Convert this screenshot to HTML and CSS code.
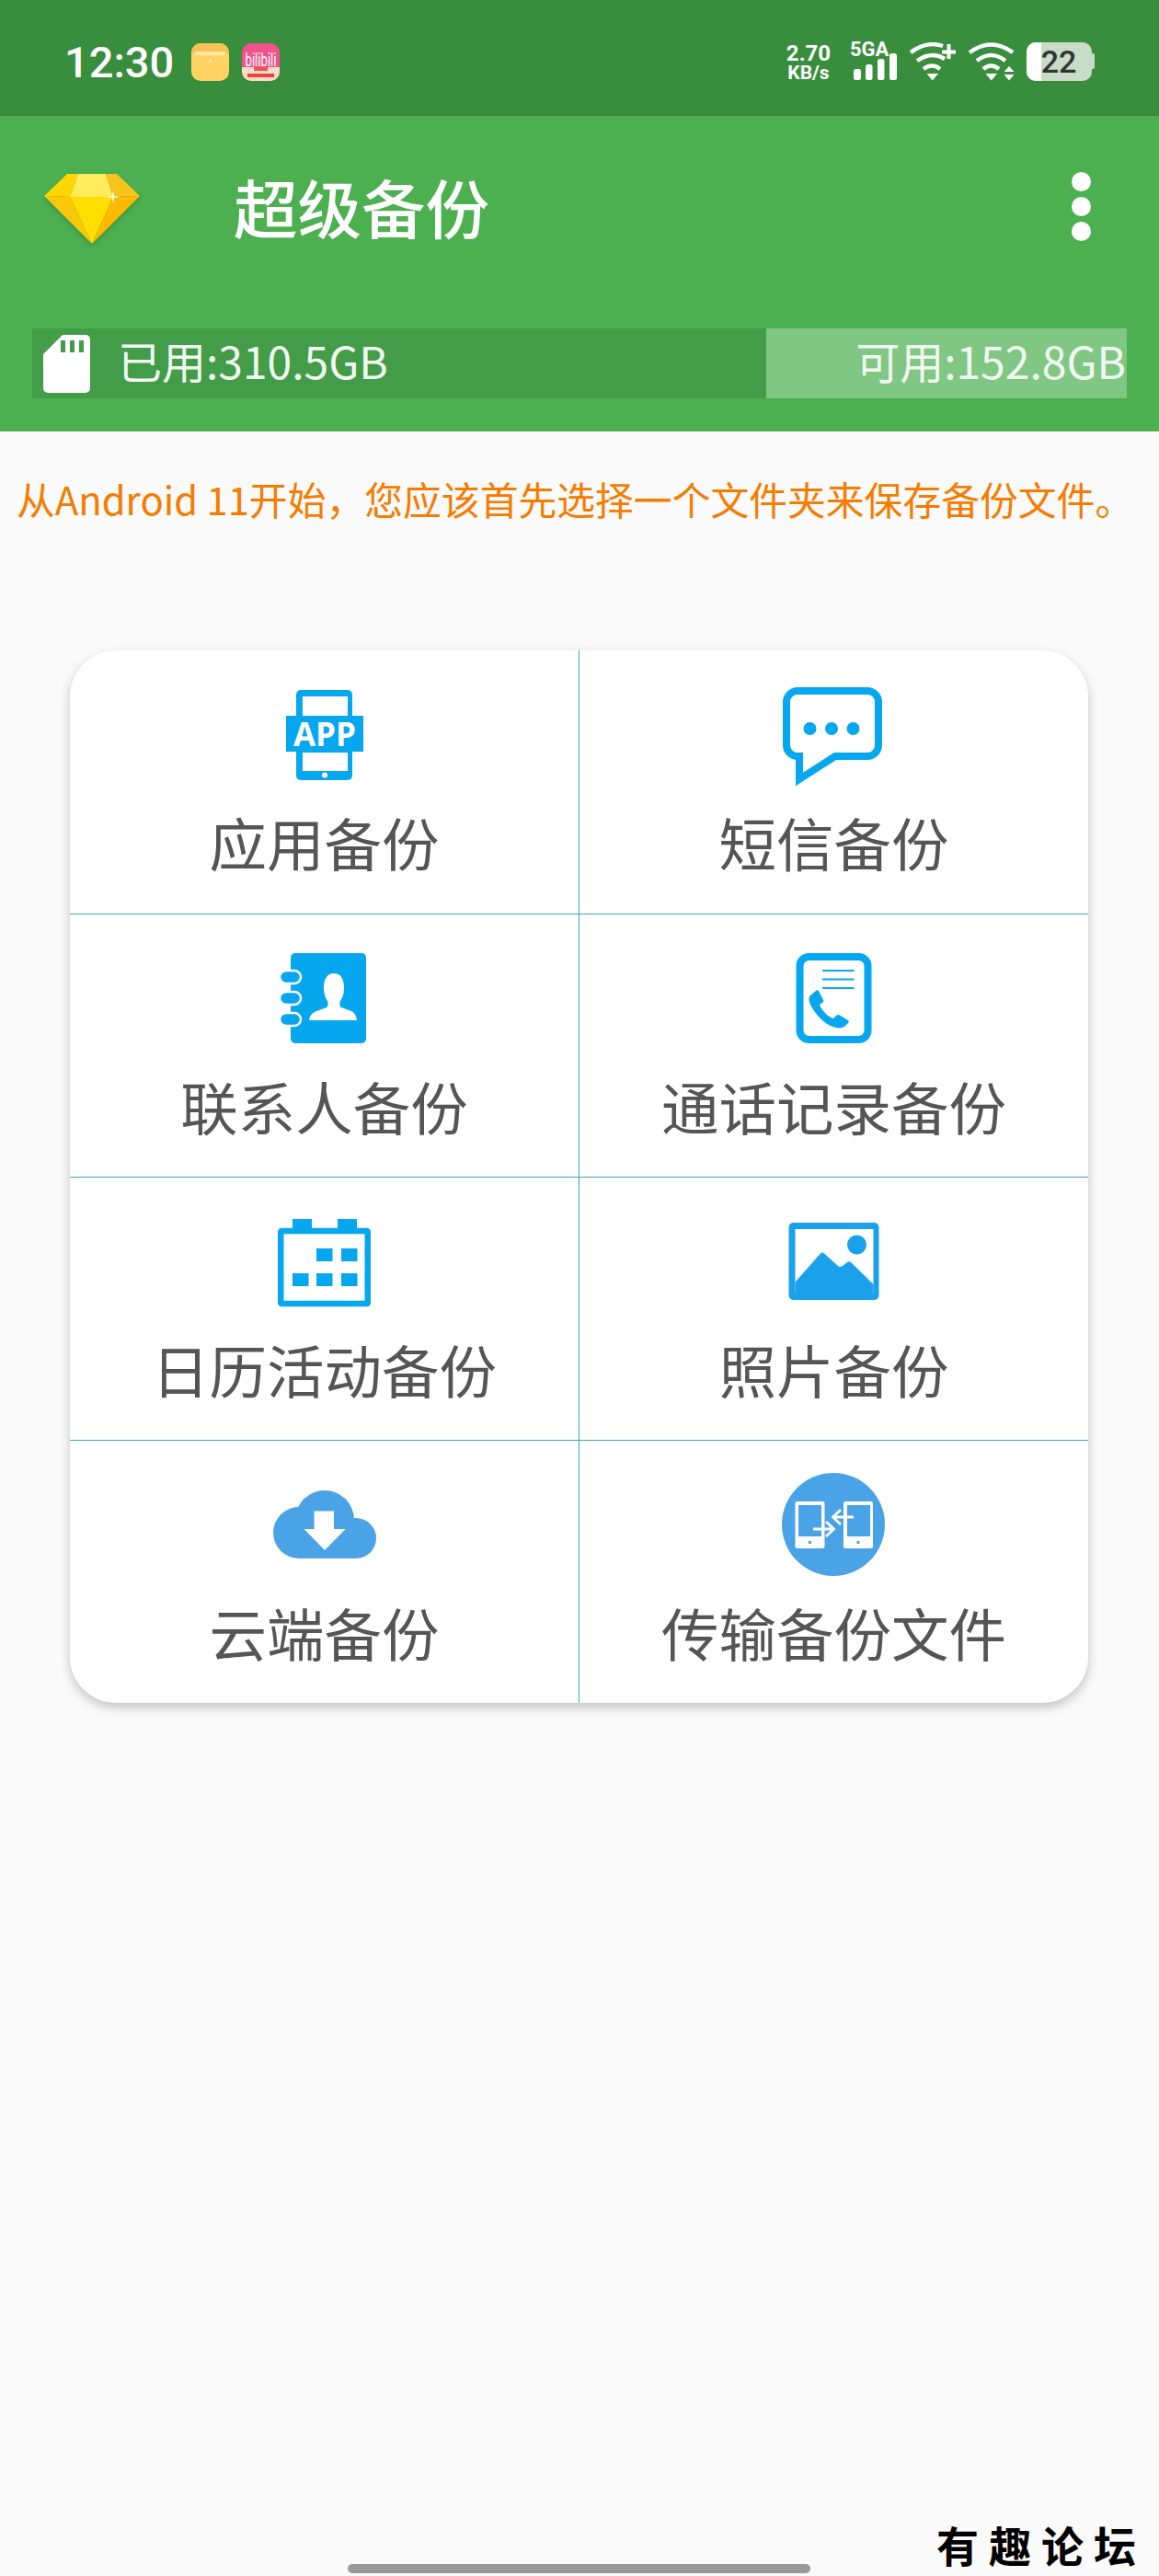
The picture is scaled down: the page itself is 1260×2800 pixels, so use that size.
FILE: index.html
```html
<!DOCTYPE html>
<html>

<head>
    <meta charset="UTF-8">
    <title>超级备份</title>
    <link rel="stylesheet" href="styles.css">
</head>

<body>
    <div class="page">
        <!-- 状态栏 -->
        <div class="status-bar">
            <span class="time">12:30</span>
            <svg class="app-icon first" viewBox="0 0 41 41">
                <rect width="41" height="41" rx="10" fill="#ffd261" />
                <path d="M0 10a10 10 0 0 1 10-10h21a10 10 0 0 1 10 10v1H0z" fill="#f8c253" />
                <rect x="4" y="9" width="33" height="4" fill="#ffe9ad" />
                <circle cx="20.500" cy="19" r="1.500" fill="#fff3cf" />
            </svg>
            <svg class="app-icon" viewBox="0 0 41 41">
                <rect width="41" height="41" rx="10" fill="#f2528c" />
                <path d="M0 26h41v5a10 10 0 0 1-10 10H10a10 10 0 0 1-10-10z" fill="#fbdcc8" />
                <text class="bili" x="3.500" y="25" textLength="34" lengthAdjust="spacingAndGlyphs">bilibili</text>
                <rect x="13" y="26" width="15" height="4" fill="#e4584f" />
                <rect x="6" y="33" width="29" height="4" fill="#e4483f" />
            </svg>
            <div class="status-right">
                <div class="speed"><span class="speed-num">2.70</span><span class="speed-unit">KB/s</span></div>
                <svg class="net" viewBox="0 0 51 42">
                    <text class="net-text" x="0" y="15">5GA</text>
                    <rect x="4" y="29" width="8" height="12" rx="2.500" fill="#fff" />
                    <rect x="17" y="24" width="7.500" height="17" rx="2.500" fill="#fff" />
                    <rect x="30" y="18" width="7.500" height="23" rx="2.500" fill="#fff" />
                    <rect x="43" y="12" width="8" height="29" rx="2.500" fill="#fff" />
                </svg>
                <svg class="wifi" viewBox="0 0 51 42">
                    <g fill="none" stroke="#fff" stroke-width="4.500">
                        <path d="M2 11Q20-2 37 4" />
                        <path d="M9 20Q25 9 39 18" />
                        <path d="M16 29Q25 22 34 29" />
                    </g>
                    <path d="M19.500 34H32L25.700 41.500z" fill="#fff" />
                    <path d="M41.500 2h4v6.500H51v4h-5.500V18h-4v-5.500H36v-4h5.500z" fill="#fff" />
                </svg>
                <svg class="wifi" viewBox="0 0 51 42">
                    <g fill="none" stroke="#fff" stroke-width="4.500">
                        <path d="M2 11Q25.500-6 49 11" />
                        <path d="M10 20Q25.500 8 41 20" />
                        <path d="M17 29Q25.500 22 34 29" />
                    </g>
                    <path d="M19.500 34H32L25.700 41.500z" fill="#fff" />
                    <path d="M39.500 32L45 26l5.500 6zM39.500 35H50.500L45 41.500z" fill="#fff" />
                </svg>
                <svg class="battery" viewBox="0 0 74 42">
                    <rect width="71" height="42" rx="10" fill="#c8dcc8" />
                    <path d="M10 0h6v42h-6a10 10 0 0 1-10-10V10a10 10 0 0 1 10-10z" fill="#fff" />
                    <path d="M71 12h1a2 2 0 0 1 2 2v13a2 2 0 0 1-2 2h-1z" fill="#c8dcc8" />
                    <text class="battery-text" x="35" y="33" text-anchor="middle">22</text>
                </svg>
            </div>
        </div>

        <!-- 顶部 -->
        <div class="header">
            <div class="title-row">
                <svg class="gem" viewBox="0 0 105 78">
                    <polygon points="26,1 38,1 29,26 1,25" fill="#ffd600" />
                    <polygon points="38,1 68,1 76,26 29,26" fill="#ffec5c" />
                    <polygon points="68,1 80,1 105,25 76,26" fill="#f7c51e" />
                    <polygon points="1,25 29,26 53,77" fill="#fcc808" />
                    <polygon points="29,26 76,26 53,77" fill="#ffde00" />
                    <polygon points="76,26 105,25 53,77" fill="#ffb900" />
                    <path d="M76 19l1.200 5.800 6 1.200-6 1.200-1.200 5.800-1.200-5.800-6-1.200 6-1.200z" fill="#fff9d6" />
                </svg>
                <h1 class="title">超级备份</h1>
                <div class="menu"><i></i><i></i><i></i></div>
            </div>
            <div class="storage">
                <div class="storage-used">
                    <svg class="sd" viewBox="0 0 51 63">
                        <path d="M21 0H46a5 5 0 0 1 5 5V58a5 5 0 0 1-5 5H5a5 5 0 0 1-5-5V21z" fill="#fff" />
                        <rect x="19" y="6" width="5" height="13" fill="#439c47" />
                        <rect x="29" y="6" width="5" height="13" fill="#439c47" />
                        <rect x="39" y="6" width="5" height="13" fill="#439c47" />
                    </svg>
                    <span>已用:310.5GB</span>
                </div>
                <div class="storage-free">可用:152.8GB</div>
            </div>
        </div>

        <p class="notice">从Android 11开始，您应该首先选择一个文件夹来保存备份文件。</p>

        <!-- 功能列表 -->
        <div class="card">
            <div class="cell">
                <svg class="icon" viewBox="0 0 112 112">
                    <rect x="25" y="7" width="61" height="98" rx="5" fill="#06a7ee" />
                    <rect x="32" y="14" width="49" height="22" fill="#fff" />
                    <rect x="32" y="75" width="49" height="20" fill="#fff" />
                    <rect x="14" y="35" width="84" height="39" fill="#06a7ee" />
                    <text class="icon-app" x="56" y="68" text-anchor="middle">APP</text>
                    <circle cx="56" cy="99.500" r="3" fill="#fff" />
                </svg>
                <div class="label">应用备份</div>
            </div>
            <div class="cell">
                <svg class="icon" viewBox="0 0 112 112">
                    <path d="M16 8H92a12 12 0 0 1 12 12V67a12 12 0 0 1-12 12H57L18 104V79H16a12 12 0 0 1-12-12V20a12 12 0 0 1 12-12z" fill="none" stroke="#06a7ee" stroke-width="8" />
                    <circle cx="29.500" cy="49" r="7" fill="#06a7ee" />
                    <circle cx="53" cy="49" r="7" fill="#06a7ee" />
                    <circle cx="76.500" cy="49" r="7" fill="#06a7ee" />
                </svg>
                <div class="label">短信备份</div>
            </div>
            <div class="cell">
                <svg class="icon" viewBox="0 0 112 112">
                    <rect x="19" y="6" width="82" height="98" rx="5" fill="#06a7ee" />
                    <g fill="#06a7ee" stroke="#fff" stroke-width="2.500">
                        <rect x="7" y="25" width="23" height="14" rx="7" />
                        <rect x="7" y="48" width="23" height="14" rx="7" />
                        <rect x="7" y="71" width="23" height="14" rx="7" />
                    </g>
                    <path d="M39 79C40 72 44 70 50 68L58 65C60 64 60 60 59 58C56 54 55 48 55 43C55 34 59 28 66 28C73 28 77 34 77 43C77 48 76 54 73 58C72 60 72 64 74 65L82 68C88 70 90 72 91 79z" fill="#fff" />
                </svg>
                <div class="label">联系人备份</div>
            </div>
            <div class="cell">
                <svg class="icon" viewBox="0 0 112 112">
                    <rect x="18.500" y="10" width="74" height="90" rx="10" fill="none" stroke="#06a7ee" stroke-width="8" />
                    <path d="M43 25H77.500M43 34.500H77.500M43 44H77.500" stroke="#06a7ee" stroke-width="2.200" />
                    <path d="M30 52L36 47C37 46 38 46 39 47L44 57C45 58 44 59 43 60L40 62C41 67 50 76 55 77L58 74C59 73 60 73 61 73L71 79C72 80 72 81 71 82L67 86C64 88 58 88 52 85C42 80 34 70 30 62C28 58 28 54 30 52z" fill="#06a7ee" />
                </svg>
                <div class="label">通话记录备份</div>
            </div>
            <div class="cell">
                <svg class="icon" viewBox="0 0 112 112">
                    <rect x="8.250" y="22" width="94.500" height="79" rx="1" fill="none" stroke="#06a7ee" stroke-width="6.500" />
                    <g fill="#06a7ee">
                        <rect x="21" y="9" width="21" height="12" />
                        <rect x="70" y="9" width="21" height="12" />
                        <rect x="47" y="41" width="17.500" height="14" />
                        <rect x="74" y="41" width="17.500" height="14" />
                        <rect x="21" y="68" width="17.500" height="14" />
                        <rect x="47" y="68" width="17.500" height="14" />
                        <rect x="74" y="68" width="17.500" height="14" />
                    </g>
                </svg>
                <div class="label">日历活动备份</div>
            </div>
            <div class="cell">
                <svg class="icon" viewBox="0 0 112 112">
                    <rect x="6.500" y="13" width="98" height="84" rx="5" fill="#1ba1ec" />
                    <rect x="13.500" y="20" width="85" height="70" fill="#fff" />
                    <circle cx="80.500" cy="37" r="10.500" fill="#1ba1ec" />
                    <path d="M13.500 77.500L41 46.500Q43 44.500 45 46.500L60 60Q63 62 65 60L70 56Q72 54.500 74 56L98.500 80V90H13.500z" fill="#1ba1ec" />
                </svg>
                <div class="label">照片备份</div>
            </div>
            <div class="cell">
                <svg class="icon" viewBox="0 0 112 112">
                    <g fill="#4aa3e6">
                        <circle cx="56" cy="50" r="32" />
                        <circle cx="28" cy="64" r="28" />
                        <circle cx="90" cy="70" r="22" />
                        <rect x="28" y="70" width="62" height="22" />
                    </g>
                    <path d="M44.500 40.500H66V60H78.700L56 83L33.600 60H44.500z" fill="#fff" />
                </svg>
                <div class="label">云端备份</div>
            </div>
            <div class="cell">
                <svg class="icon" viewBox="0 0 112 112">
                    <circle cx="55" cy="55" r="56" fill="#4aa3e6" />
                    <rect x="13.500" y="30" width="32" height="51" rx="2" fill="#fff" />
                    <rect x="66" y="30" width="32" height="51" rx="2" fill="#fff" />
                    <rect x="17" y="34" width="25" height="34" fill="#4aa3e6" />
                    <rect x="70" y="34" width="25" height="34" fill="#4aa3e6" />
                    <rect x="28" y="73" width="3" height="3" fill="#4aa3e6" />
                    <rect x="80.500" y="73" width="3" height="3" fill="#4aa3e6" />
                    <path d="M33 60H55M47 52L55.500 60L47 68" fill="none" stroke="#fff" stroke-width="2.800" />
                    <path d="M77 47H55M63 39L54.500 47L63 55" fill="none" stroke="#fff" stroke-width="2.800" />
                </svg>
                <div class="label">传输备份文件</div>
            </div>
        </div>

        <div class="watermark">有趣论坛</div>
        <div class="home-bar"></div>
    </div>
</body>

</html>
```

FILE: styles.css
```css
/* 页面 */
body {
    margin: 0;
}

.page {
    position: relative;
    width: 1260px;
    height: 2800px;
    overflow: hidden;
    background: #fafafa;
    font-family: "Noto Sans CJK SC", "Noto Sans", sans-serif;
}

/* 状态栏 */
.status-bar {
    display: flex;
    align-items: center;
    box-sizing: border-box;
    height: 126px;
    padding: 8px 70px 0 70px;
    background: #388e3c;
    color: #fff;
}

.time {
    width: 138px;
    font-family: Roboto, sans-serif;
    font-size: 47px;
    font-weight: 500;
}

.app-icon {
    width: 41px;
    height: 41px;
    margin-left: 14px;
    overflow: visible;
}

.app-icon.first {
    margin-left: 0;
}

.bili {
    font-family: Roboto, sans-serif;
    font-size: 20px;
    fill: #fff;
}

.status-right {
    display: flex;
    align-items: center;
    gap: 13px;
    margin-left: auto;
}

.speed {
    display: flex;
    flex-direction: column;
    align-items: center;
    width: 52px;
    margin-right: 6px;
    font-family: Roboto, sans-serif;
    font-weight: 700;
}

.speed-num {
    font-size: 24px;
    line-height: 24px;
}

.speed-unit {
    font-size: 21px;
    line-height: 19px;
}

.net {
    width: 51px;
    height: 42px;
    overflow: visible;
}

.net-text {
    font-family: Roboto, sans-serif;
    font-size: 22px;
    font-weight: 700;
    fill: #fff;
}

.wifi {
    width: 51px;
    height: 42px;
}

.battery {
    width: 74px;
    height: 42px;
}

.battery-text {
    font-family: Roboto, sans-serif;
    font-size: 34px;
    font-weight: 500;
    fill: #333;
}

/* 顶部 */
.header {
    box-sizing: border-box;
    height: 343px;
    padding: 26px 35px 0;
    background: #4caf50;
}

.title-row {
    display: flex;
    align-items: center;
    height: 150px;
    margin-bottom: 55px;
}

.gem {
    width: 105px;
    height: 78px;
    margin-left: 12px;
    filter: drop-shadow(0 2px 2px rgba(0, 0, 0, 0.2));
}

.title {
    margin: -6px 0 0 102px;
    color: #fff;
    font-size: 69.5px;
    font-weight: 500;
    line-height: 80px;
}

.menu {
    display: flex;
    flex-direction: column;
    gap: 6px;
    margin: -6px 39px 0 auto;
}

.menu i {
    display: block;
    width: 21px;
    height: 21px;
    border-radius: 50%;
    background: #fff;
}

.storage {
    display: flex;
    height: 76px;
    color: #f1f8f1;
    font-size: 48px;
}

.storage-used {
    display: flex;
    align-items: center;
    flex: 1;
    padding-left: 12px;
    background: #439c47;
    line-height: 68px;
}

.storage-used span {
    margin-top: -8px;
}

.sd {
    width: 51px;
    height: 63px;
    margin-right: 30px;
}

.storage-free {
    width: 392px;
    padding-right: 1px;
    box-sizing: border-box;
    background: #81c784;
    line-height: 68px;
    text-align: right;
}

/* 提示 */
.notice {
    margin: 46px 0 136px;
    padding-left: 18px;
    color: #f57c00;
    font-size: 41.8px;
    line-height: 54px;
    white-space: nowrap;
}

/* 功能列表 */
.card {
    display: grid;
    grid-template-columns: 553px 554px;
    grid-auto-rows: 286px;
    width: 1107px;
    margin-top: 138px;
    margin-left: 76px;
    overflow: hidden;
    border-radius: 50px;
    background: #fff;
    box-shadow: 0 5px 12px rgba(0, 0, 0, 0.22);
}

.cell {
    display: flex;
    flex-direction: column;
    align-items: center;
    box-sizing: border-box;
    padding-top: 36px;
}

.cell:nth-child(even) {
    border-left: 1px solid #3aa7be;
}

.cell:nth-child(n+3) {
    border-top: 1px solid #3aa7be;
}

.icon {
    width: 112px;
    height: 112px;
    flex: none;
    overflow: visible;
}

.icon-app {
    font-family: "Open Sans", sans-serif;
    font-size: 35px;
    font-weight: 700;
    fill: #fff;
}

.label {
    margin-top: 20px;
    color: #555;
    font-size: 62.5px;
    line-height: 80px;
    white-space: nowrap;
}

/* 水印和底部横条 */
.watermark {
    position: absolute;
    left: 1018px;
    top: 2733px;
    color: #000;
    font-size: 46px;
    font-weight: 700;
    letter-spacing: 11px;
    line-height: 64px;
    white-space: nowrap;
}

.home-bar {
    position: absolute;
    left: 378px;
    top: 2787px;
    width: 503px;
    height: 10px;
    border-radius: 5px;
    background: #999;
}
```
